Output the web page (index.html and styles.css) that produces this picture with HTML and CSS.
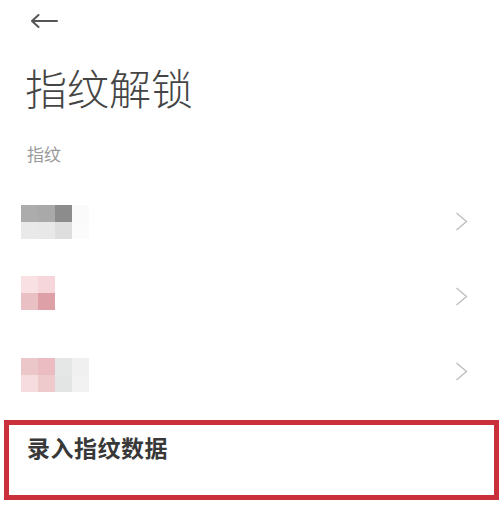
FILE: index.html
```html
<!DOCTYPE html>
<html lang="zh-CN">

<head>
  <meta charset="utf-8">
  <title>指纹解锁</title>
  <link rel="stylesheet" href="styles.css">
</head>

<body>
  <header class="topbar">
    <svg class="back" width="28" height="14" viewBox="0 0 28 14">
      <path d="M2 7 H27 M8.5 1 L2 7 L8.5 13" fill="none" stroke="#555" stroke-width="2" stroke-linecap="round" stroke-linejoin="round" />
    </svg>
  </header>

  <h1 class="titulo">指纹解锁</h1>
  <p class="rotulo">指纹</p>

  <ul class="lista">
    <li class="item">
      <div class="thumb">
        <span class="g1"></span><span class="g2"></span><span class="g3"></span><span class="g4"></span>
        <span class="g5"></span><span class="g6"></span><span class="g7"></span><span class="g8"></span>
      </div>
      <svg class="seta" width="13" height="19" viewBox="0 0 13 19">
        <path d="M1.5 1 L11.5 9.5 L1.5 18" fill="none" stroke="#bcbcbc" stroke-width="1.3" />
      </svg>
    </li>
    <li class="item">
      <div class="thumb acima">
        <span class="p1"></span><span class="p2"></span><span></span><span></span>
        <span class="p3"></span><span class="p4"></span><span></span><span></span>
      </div>
      <svg class="seta" width="13" height="19" viewBox="0 0 13 19">
        <path d="M1.5 1 L11.5 9.5 L1.5 18" fill="none" stroke="#bcbcbc" stroke-width="1.3" />
      </svg>
    </li>
    <li class="item">
      <div class="thumb abaixo">
        <span class="r1"></span><span class="r2"></span><span class="r3"></span><span class="r4"></span>
        <span class="r5"></span><span class="r6"></span><span class="r7"></span><span class="r8"></span>
      </div>
      <svg class="seta" width="13" height="19" viewBox="0 0 13 19">
        <path d="M1.5 1 L11.5 9.5 L1.5 18" fill="none" stroke="#bcbcbc" stroke-width="1.3" />
      </svg>
    </li>
  </ul>

  <div class="destaque">
    <p>录入指纹数据</p>
  </div>
</body>

</html>
```

FILE: styles.css
```css
body {
  margin: 0;
  background: #fff;
  font-family: "Noto Sans CJK SC", "Noto Sans", sans-serif;
  overflow: hidden;
}

.topbar {
  padding: 14px 0 0 30px;
  height: 14px;
}

.back {
  display: block;
}

.titulo {
  margin: 38px 0 0 25px;
  font-size: 42px;
  line-height: 42px;
  font-weight: 300;
  color: #454545;
}

.rotulo {
  margin: 37px 0 0 27px;
  font-size: 17px;
  line-height: 17px;
  color: #9a9a9a;
}

.lista {
  list-style: none;
  margin: 22px 0 0;
  padding: 0;
}

.item {
  height: 75px;
  display: flex;
  align-items: center;
  justify-content: space-between;
  padding: 0 36px 0 21px;
}

.thumb {
  display: grid;
  grid-template-columns: repeat(4, 17px);
  grid-auto-rows: 17px;
}

.acima {
  margin-top: -8px;
}

.abaixo {
  margin-top: 6px;
}

/* cinza */
.g1 { background: #acacac; }
.g2 { background: #a9a9a9; }
.g3 { background: #8c8c8c; }
.g4 { background: #fafafa; }
.g5 { background: #e9e9e9; }
.g6 { background: #e8e8e8; }
.g7 { background: #dedede; }
.g8 { background: #fbfbfb; }

/* rosa */
.p1 { background: #f9e0e2; }
.p2 { background: #f6d6da; }
.p3 { background: #e9c0c4; }
.p4 { background: #dea0a7; }

.r1 { background: #ebc7ca; }
.r2 { background: #ebbcc1; }
.r3 { background: #e5e6e6; }
.r4 { background: #f0f0f0; }
.r5 { background: #f7dcdf; }
.r6 { background: #efcacd; }
.r7 { background: #e3e5e5; }
.r8 { background: #f2f2f2; }

.destaque {
  margin: 11px 5px 0 4px;
  height: 80px;
  box-sizing: border-box;
  border: 5px solid #c9303a;
  padding: 11px 0 0 18px;
}

.destaque p {
  margin: 0;
  font-size: 23px;
  line-height: 23px;
  letter-spacing: 0.5px;
  font-weight: 600;
  color: #383838;
}
```
